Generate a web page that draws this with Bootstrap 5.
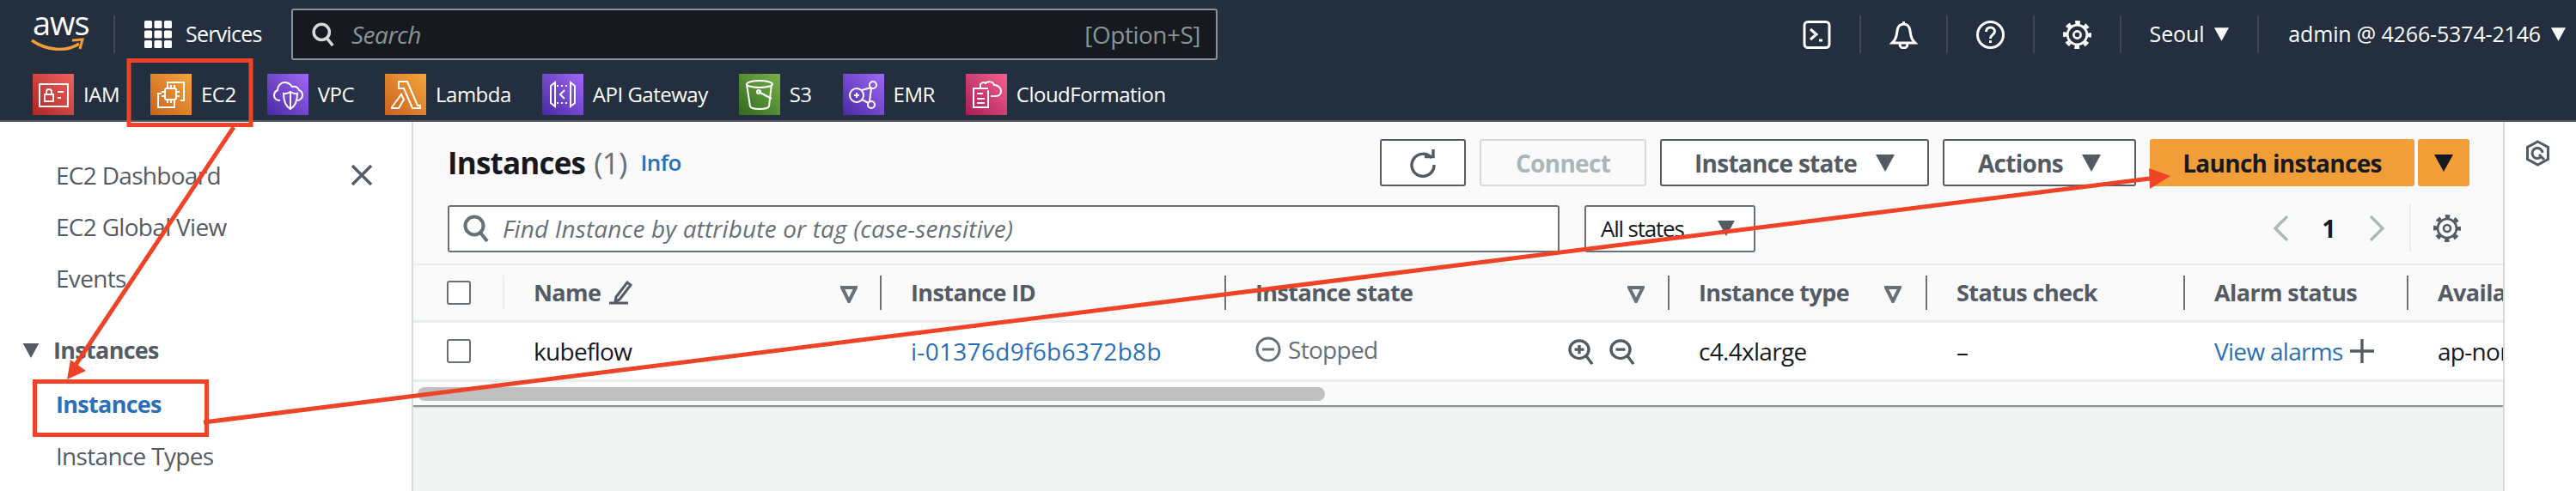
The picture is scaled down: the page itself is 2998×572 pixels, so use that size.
<!DOCTYPE html>
<html lang="en">
<head>
<meta charset="UTF-8">
<title>Instances | EC2</title>
<link href="https://cdn.jsdelivr.net/npm/bootstrap@5.3.3/dist/css/bootstrap.min.css" rel="stylesheet">
<style>
    html, body { height: 100%; }
    body { position: relative; overflow: hidden; background: #f2f3f3; color: #16191f; font-family: "Open Sans", "Liberation Sans", sans-serif; font-size: 24px; letter-spacing: -.6px; }
    svg { display: block; flex: none; }

    .top-head { height: 142px; background: #232f3e; border-bottom: 2px solid #545b64; color: #fff; }
    .top-row { height: 70px; padding: 10px 12px 0 36px; font-size: 25px; letter-spacing: -.15px; }
    .aws-logo { width: 62px; height: 44px; position: relative; }
    .aws-word { position: absolute; left: 2px; top: -14px; font: 400 38px/44px "Open Sans", sans-serif; letter-spacing: -1px; }
    .aws-smile { position: absolute; left: 0; top: 26px; }
    .top-sep { width: 2px; height: 44px; background: #414750; margin: 0 34px 0 34px; }
    .services-link { margin-left: 16px; width: 123px; letter-spacing: -.75px; }
    .top-search { width: 1078px; height: 60px; background: #16191f; border: 2px solid #879596; border-radius: 3px; padding: 0 18px 0 22px; color: #879596; font-size: 28px; letter-spacing: -.5px; }
    .top-search i { margin-left: 20px; }
    .head-cell { height: 44px; padding: 0 33px; border-right: 2px solid #414750; }
    .head-cell.plain { border-right: 0; padding-right: 0; padding-left: 34px; }
    .fav-row { padding-left: 38px; height: 70px; padding-top: 16px; letter-spacing: -.5px; }
    .fav-item { margin-right: 36px; }
    .fav-item span { margin-left: 11px; }

    .page-body { height: 430px; }
    .side-nav { width: 481px; flex: none; background: #fff; border-right: 2px solid #d5dbdb; padding: 32px 45px 0 65px; color: #545b64; font-size: 28px; letter-spacing: -.7px; }
    .side-link { height: 60px; }
    .side-group { height: 60px; margin: 24px 0 3px -39px; font-weight: 700; font-size: 27px; }
    .side-on { color: #2a6fb8; font-weight: 700; font-size: 27px; }

    .main-pane { flex: 1; min-width: 0; overflow: hidden; }
    .right-rail { width: 85px; flex: none; background: #fff; border-left: 2px solid #d5dbdb; padding: 21px 0 0 24px; }
    .pane-top { background: #fafafa; padding: 20px 39px 13px 40px; height: 165px; }
    .pane-title { font-size: 35px; font-weight: 700; letter-spacing: -.8px; }
    .pane-title em { font-style: normal; font-weight: 400; color: #687078; margin-left: 10px; }
    .info-link { color: #2a6fb8; font-size: 26px; font-weight: 600; margin-left: 16px; }
    .aws-btn { height: 55px; border: 2px solid #545b64; border-radius: 3px; background: #fff; color: #545b64; font-size: 28px; font-weight: 700; letter-spacing: -.7px; padding: 0; display: flex; align-items: center; justify-content: center; gap: 22px; }
    .aws-btn.off { border-color: #d5dbdb; color: #aab7b8; opacity: 1; }
    .aws-btn.go { background: #f29e38; border: 0; color: #16191f; }
    .btn-refresh { width: 100px; }
    .btn-connect { width: 194px; }
    .btn-state { width: 313px; }
    .btn-actions { width: 225px; }
    .btn-launch { width: 308px; }
    .btn-split { width: 60px; }
    .filter-box { width: 1294px; height: 55px; background: #fff; border: 2px solid #687078; border-radius: 3px; padding: 0 0 0 16px; color: #687078; font-style: italic; font-size: 28px; letter-spacing: .14px; }
    .state-pick { width: 199px; height: 55px; margin-left: 29px; background: #fff; border: 2px solid #687078; border-radius: 3px; padding: 0 22px 0 17px; font-size: 26px; letter-spacing: -1.2px; }
    .pager-wrap { margin-left: auto; margin-right: 10px; }
    .pager-sep { width: 2px; height: 56px; background: #eaeded; margin: 0 26px 0 28px; }
    .pager-num { font-weight: 700; font-size: 28px; margin: 0 39px; }

    .inst-table { width: 2600px; table-layout: fixed; margin: 0; border-top: 2px solid #eaeded; font-size: 28px; letter-spacing: -.7px; }
    .inst-table th, .inst-table td { padding: 0 0 0 34px; vertical-align: middle; position: relative; border-bottom: 3px solid #eaeded; white-space: nowrap; overflow: hidden; }
    .inst-table th { height: 66px; background: #fafafa; color: #545b64; font-weight: 700; font-size: 27px; letter-spacing: -.6px; }
    .inst-table td { height: 69px; background: #fff; color: #16191f; }
    .inst-table th::after { content: ""; position: absolute; right: 0; top: 12px; height: 40px; width: 2px; background: #687078; }
    .inst-table th.first-col::after { background: #eaeded; }
    .inst-table .first-col { padding-left: 39px; }
    .sel-box { width: 28px; height: 28px; background: #fff; border: 2px solid #687078; border-radius: 3px; }
    .col-filter { position: absolute; top: 24px; }
    .inst-link { color: #2a6fb8; }
    .id-link { letter-spacing: .3px; }
    .cell-gray { color: #687078; }
    .zoom-tools { position: absolute; top: 19px; left: 398px; }
    .scroll-bit { height: 29px; background: #fafafa; border-bottom: 2px solid #879596; padding: 6px 0 0 5px; box-shadow: 0 1px 2px rgba(0,0,0,.15); }
    .scroll-thumb { width: 1056px; height: 16px; background: #c0c0c0; border-radius: 8px; }

    .note-layer { position: absolute; left: 0; top: 0; pointer-events: none; }
</style>
</head>
<body>
<svg width="0" height="0" style="position:absolute">
    <symbol id="tri" viewBox="0 0 22 20"><polygon points="0,0 22,0 11,20" fill="currentColor"/></symbol>
    <symbol id="tri-open" viewBox="0 0 20 20"><polygon points="2,2 18,2 10,18" fill="none" stroke="currentColor" stroke-width="4"/></symbol>
    <symbol id="gear" viewBox="0 0 32 32">
        <g fill="none" stroke="currentColor">
            <circle cx="16" cy="16" r="11" stroke-width="2.6"/>
            <circle cx="16" cy="16" r="14" stroke-width="4" stroke-dasharray="5.5 5.5" stroke-dashoffset="2.7"/>
            <circle cx="16" cy="16" r="4" stroke-width="2.6"/>
        </g>
    </symbol>
    <symbol id="glass" viewBox="0 0 30 32"><g fill="none" stroke="currentColor" stroke-width="4"><circle cx="13" cy="13" r="10.5"/><path d="M20 21l8 10"/></g></symbol>
</svg>

<header class="top-head">
    <div class="top-row d-flex align-items-center">
        <div class="aws-logo">
            <span class="aws-word">aws</span>
            <svg class="aws-smile" width="62" height="18" viewBox="0 0 62 18"><path d="M1 3c17 12 40 14 55 4" fill="none" stroke="#f29e38" stroke-width="3.4"/><path d="M48 3l12-1-3 11" fill="none" stroke="#f29e38" stroke-width="3"/></svg>
        </div>
        <div class="top-sep"></div>
        <svg width="32" height="32" viewBox="0 0 32 32" fill="#fff"><rect width="9" height="9" rx="1.5"/><rect x="11.500" width="9" height="9" rx="1.5"/><rect x="23" width="9" height="9" rx="1.5"/><rect y="11.500" width="9" height="9" rx="1.5"/><rect x="11.500" y="11.500" width="9" height="9" rx="1.5"/><rect x="23" y="11.500" width="9" height="9" rx="1.5"/><rect y="23" width="9" height="9" rx="1.5"/><rect x="11.500" y="23" width="9" height="9" rx="1.5"/><rect x="23" y="23" width="9" height="9" rx="1.5"/></svg>
        <span class="services-link">Services</span>
        <div class="top-search d-flex align-items-center">
            <svg width="26" height="28" style="color:#d5dbdb"><use href="#glass"/></svg>
            <i>Search</i>
            <span class="ms-auto">[Option+S]</span>
        </div>
        <div class="d-flex align-items-center ms-auto">
            <div class="head-cell d-flex align-items-center"><svg width="33" height="33" viewBox="0 0 33 33" fill="none" stroke="#fff" stroke-width="3"><rect x="2" y="1.500" width="29" height="30" rx="4"/><path d="M9 10l7 6-7 6"/><path d="M19 23h4"/></svg></div>
            <div class="head-cell d-flex align-items-center"><svg width="33" height="33" viewBox="0 0 33 33" fill="none" stroke="#fff" stroke-width="3"><path d="M16.500 1v3M3 26c3-3 5-5 6-14 .5-5 3.500-8 7.500-8s7 3 7.500 8c1 9 3 11 6 14z"/><path d="M12 27c0 3 2 5 4.500 5s4.500-2 4.500-5"/></svg></div>
            <div class="head-cell d-flex align-items-center"><svg width="33" height="33" viewBox="0 0 33 33" fill="none" stroke="#fff" stroke-width="3"><circle cx="16.500" cy="16.500" r="15"/><path d="M11.500 13c0-3 2-5 5-5s5 2 5 4.500c0 4-5 4-5 8.500"/><path d="M16.500 23v3"/></svg></div>
            <div class="head-cell d-flex align-items-center"><svg width="33" height="33" style="color:#fff"><use href="#gear"/></svg></div>
            <div class="head-cell d-flex align-items-center gap-2">Seoul<svg width="17" height="18" class="ms-1" style="color:#fff"><use href="#tri"/></svg></div>
            <div class="head-cell plain d-flex align-items-center gap-2">admin @ 4266-5374-2146<svg width="17" height="18" class="ms-1" style="color:#fff"><use href="#tri"/></svg></div>
        </div>
    </div>
    <div class="fav-row d-flex align-items-start">
        <a class="fav-item d-flex align-items-center text-white text-decoration-none" href="#">
            <svg width="48" height="48" viewBox="0 0 48 48"><defs><linearGradient id="gr" x1="0" y1="1" x2="1" y2="0"><stop offset="0" stop-color="#b02525"/><stop offset="1" stop-color="#f0625f"/></linearGradient></defs><rect width="48" height="48" fill="url(#gr)"/><g fill="none" stroke="#fff" stroke-width="2"><rect x="8" y="12" width="33" height="26"/><rect x="14" y="24" width="10" height="8"/><path d="M16 24v-3a3 3 0 0 1 6 0v3M29 21h7M29 28h4"/></g></svg>
            <span>IAM</span>
        </a>
        <a class="fav-item d-flex align-items-center text-white text-decoration-none" href="#">
            <svg width="48" height="48" viewBox="0 0 48 48"><defs><linearGradient id="go" x1="0" y1="1" x2="1" y2="0"><stop offset="0" stop-color="#c8621f"/><stop offset="1" stop-color="#f5a53a"/></linearGradient></defs><rect width="48" height="48" fill="url(#go)"/><g fill="none" stroke="#fff" stroke-width="2"><path d="M20 13v-3h19v21h-4"/><rect x="17" y="17" width="13" height="13" rx="2"/><path d="M20 13v4M24 13v4M28 13v4M20 30v4M24 30v4M28 30v4M13 21h4M13 26h4M30 21h4M30 26h4"/><path d="M13 23H9v16h19v-5"/></g></svg>
            <span>EC2</span>
        </a>
        <a class="fav-item d-flex align-items-center text-white text-decoration-none" href="#">
            <svg width="48" height="48" viewBox="0 0 48 48"><defs><linearGradient id="gp" x1="0" y1="1" x2="1" y2="0"><stop offset="0" stop-color="#4a28a6"/><stop offset="1" stop-color="#9f68f5"/></linearGradient></defs><rect width="48" height="48" fill="url(#gp)"/><g fill="none" stroke="#fff" stroke-width="2"><path d="M15 31c-5 0-7-3-7-6 0-3 2-5 4-6 0-5 4-9 8-9 4 0 7 2 9 5 4-1 7 1 8 4 3 1 4 4 4 6 0 3-3 6-6 6"/><path d="M27 21c5 3 8 2 8 2 0 9-3 15-8 18-5-3-8-9-8-18 0 0 3 1 8-2zM27 22v18"/></g></svg>
            <span>VPC</span>
        </a>
        <a class="fav-item d-flex align-items-center text-white text-decoration-none" href="#">
            <svg width="48" height="48" viewBox="0 0 48 48"><rect width="48" height="48" fill="url(#go)"/><path d="M16 9h10l12 28h3v3h-9L22 17h-6zM19 24l3 6-6 10H8v-1z" fill="none" stroke="#fff" stroke-width="2"/></svg>
            <span>Lambda</span>
        </a>
        <a class="fav-item d-flex align-items-center text-white text-decoration-none" href="#">
            <svg width="48" height="48" viewBox="0 0 48 48"><rect width="48" height="48" fill="url(#gp)"/><g fill="none" stroke="#fff" stroke-width="2"><path d="M10 14v20l5 4V10zM38 14v20l-5 4V10z"/><path d="M26 19l-5 5 5 5M17 14h2M22 14h2M27 14h2M17 34h2M22 34h2M27 34h2"/></g></svg>
            <span>API Gateway</span>
        </a>
        <a class="fav-item d-flex align-items-center text-white text-decoration-none" href="#">
            <svg width="48" height="48" viewBox="0 0 48 48"><defs><linearGradient id="gg" x1="0" y1="1" x2="1" y2="0"><stop offset="0" stop-color="#2f6a1e"/><stop offset="1" stop-color="#79b04a"/></linearGradient></defs><rect width="48" height="48" fill="url(#gg)"/><g fill="none" stroke="#fff" stroke-width="2"><ellipse cx="24" cy="12" rx="15" ry="4"/><path d="M9 12l4 26c1 2 5 3 11 3s10-1 11-3l3-26"/><path d="M23 21l15 8"/><circle cx="23" cy="21" r="2"/></g></svg>
            <span>S3</span>
        </a>
        <a class="fav-item d-flex align-items-center text-white text-decoration-none" href="#">
            <svg width="48" height="48" viewBox="0 0 48 48"><rect width="48" height="48" fill="url(#gp)"/><g fill="none" stroke="#fff" stroke-width="2"><circle cx="16" cy="25" r="8"/><circle cx="35" cy="13" r="4"/><circle cx="33" cy="36" r="4"/><path d="M22 19l11-3M22 30l8 4M33 17l-2 15M13 25h6M16 22v6"/></g></svg>
            <span>EMR</span>
        </a>
        <a class="fav-item d-flex align-items-center text-white text-decoration-none" href="#">
            <svg width="48" height="48" viewBox="0 0 48 48"><defs><linearGradient id="gc" x1="0" y1="1" x2="1" y2="0"><stop offset="0" stop-color="#ab1d55"/><stop offset="1" stop-color="#f2618f"/></linearGradient></defs><rect width="48" height="48" fill="url(#gc)"/><g fill="none" stroke="#fff" stroke-width="2"><path d="M26 17H9v22h17V19M13 23h7M13 29h9M13 34h9"/><path d="M17 17v-5c3-3 5-2 6-1 3-3 9-2 10 2 4 0 8 3 8 7 0 4-3 6-6 6h-6"/></g></svg>
            <span>CloudFormation</span>
        </a>
    </div>
</header>

<div class="page-body d-flex">
    <nav class="side-nav">
        <div class="side-link d-flex align-items-center justify-content-between">EC2 Dashboard
            <svg width="26" height="26" viewBox="0 0 26 26"><path d="M2 2l22 22M24 2L2 24" stroke="#545b64" stroke-width="3.400"/></svg>
        </div>
        <div class="side-link d-flex align-items-center">EC2 Global View</div>
        <div class="side-link d-flex align-items-center">Events</div>
        <div class="side-group d-flex align-items-center gap-3"><svg width="20" height="17"><use href="#tri"/></svg>Instances</div>
        <div class="side-link side-on d-flex align-items-center">Instances</div>
        <div class="side-link d-flex align-items-center">Instance Types</div>
    </nav>

    <main class="main-pane">
        <div class="pane-top">
            <div class="d-flex align-items-center">
                <h1 class="pane-title m-0">Instances<em>(1)</em></h1>
                <a class="info-link text-decoration-none" href="#">Info</a>
                <div class="d-flex ms-auto" style="gap:16px">
                    <button class="btn aws-btn btn-refresh"><svg width="34" height="34" viewBox="0 0 34 34" fill="none" stroke="#545b64" stroke-width="3.400"><path d="M27 11a13 13 0 1 0 3 8"/><path d="M19 9.500h10V1"/></svg></button>
                    <button class="btn aws-btn off btn-connect" disabled>Connect</button>
                    <button class="btn aws-btn btn-state">Instance state<svg width="22" height="20"><use href="#tri"/></svg></button>
                    <button class="btn aws-btn btn-actions">Actions<svg width="22" height="20"><use href="#tri"/></svg></button>
                    <div class="d-flex" style="gap:4px">
                        <button class="btn aws-btn go btn-launch">Launch instances</button>
                        <button class="btn aws-btn go btn-split"><svg width="22" height="20"><use href="#tri"/></svg></button>
                    </div>
                </div>
            </div>
            <div class="d-flex align-items-center" style="margin-top:21px">
                <div class="filter-box d-flex align-items-center gap-3">
                    <svg width="30" height="32"><use href="#glass"/></svg>
                    <span>Find Instance by attribute or tag (case-sensitive)</span>
                </div>
                <div class="state-pick d-flex align-items-center justify-content-between">All states<svg width="20" height="18" style="color:#545b64"><use href="#tri"/></svg></div>
                <div class="pager-wrap d-flex align-items-center">
                    <svg width="19" height="30" viewBox="0 0 19 30" fill="none" stroke="#aab7b8" stroke-width="3.400"><path d="M17 1L3 15l14 14"/></svg>
                    <span class="pager-num">1</span>
                    <svg width="19" height="30" viewBox="0 0 19 30" fill="none" stroke="#aab7b8" stroke-width="3.400"><path d="M2 1l14 14L2 29"/></svg>
                    <div class="pager-sep"></div>
                    <svg width="32" height="32" style="color:#545b64"><use href="#gear"/></svg>
                </div>
            </div>
        </div>
        <table class="table inst-table">
            <colgroup>
                <col style="width:106px"><col style="width:439px"><col style="width:401px"><col style="width:516px"><col style="width:300px"><col style="width:300px"><col style="width:260px"><col style="width:278px">
            </colgroup>
            <thead>
                <tr>
                    <th class="first-col"><div class="sel-box"></div></th>
                    <th><span class="d-inline-flex align-items-center gap-2">Name
                        <svg width="30" height="28" viewBox="0 0 30 28"><path d="M10 19L23 2l4 3-13 17-5 2zM2 26h22" fill="none" stroke="#545b64" stroke-width="3"/></svg></span>
                        <svg class="col-filter" width="20" height="20" style="left:391px;color:#687078"><use href="#tri-open"/></svg></th>
                    <th>Instance ID</th>
                    <th>Instance state<svg class="col-filter" width="20" height="20" style="left:467px;color:#687078"><use href="#tri-open"/></svg></th>
                    <th>Instance type<svg class="col-filter" width="20" height="20" style="left:250px;color:#687078"><use href="#tri-open"/></svg></th>
                    <th>Status check</th>
                    <th>Alarm status</th>
                    <th>Availability Zone</th>
                </tr>
            </thead>
            <tbody>
                <tr>
                    <td class="first-col"><div class="sel-box"></div></td>
                    <td>kubeflow</td>
                    <td><a class="inst-link id-link text-decoration-none" href="#">i-01376d9f6b6372b8b</a></td>
                    <td>
                        <span class="cell-gray d-inline-flex align-items-center gap-2"><svg width="30" height="30" viewBox="0 0 30 30" fill="none" stroke="#687078" stroke-width="3"><circle cx="15" cy="15" r="13"/><path d="M8 15h14"/></svg>Stopped</span>
                        <span class="zoom-tools d-flex" style="gap:18px">
                            <svg width="30" height="30" viewBox="0 0 30 32" preserveAspectRatio="none" fill="none" stroke="#545b64" stroke-width="3.400"><circle cx="13" cy="13" r="11"/><path d="M21 21l7 10M7.500 13h11M13 7.500v11"/></svg>
                            <svg width="30" height="30" viewBox="0 0 30 32" preserveAspectRatio="none" fill="none" stroke="#545b64" stroke-width="3.400"><circle cx="13" cy="13" r="11"/><path d="M21 21l7 10M7.500 13h11"/></svg>
                        </span>
                    </td>
                    <td>c4.4xlarge</td>
                    <td>–</td>
                    <td><span class="d-inline-flex align-items-center gap-2"><a class="inst-link text-decoration-none" href="#">View alarms</a><svg width="28" height="28" viewBox="0 0 28 28"><path d="M14 0v28M0 14h28" stroke="#545b64" stroke-width="3.400"/></svg></span></td>
                    <td>ap-northeast-2a</td>
                </tr>
            </tbody>
        </table>
        <div class="scroll-bit"><div class="scroll-thumb"></div></div>
    </main>

    <aside class="right-rail">
        <svg width="29" height="31" viewBox="0 0 29 31" fill="none" stroke="#545b64" stroke-width="3"><path d="M14.500 2l12 6.500v14l-12 6.500-12-6.500v-14z"/><path d="M18 20a6 6 0 1 1 2-5M16 17l6 6"/></svg>
    </aside>
</div>

<svg class="note-layer" width="2998" height="572" viewBox="0 0 2998 572" fill="none">
    <rect x="150" y="70.500" width="142" height="75" stroke="#ee4326" stroke-width="5"/>
    <rect x="40.500" y="444.500" width="200" height="62" stroke="#ee4326" stroke-width="5"/>
    <path d="M272 148L88 425" stroke="#ee4326" stroke-width="5"/>
    <polygon points="78,442 82,419 100,432" fill="#ee4326"/>
    <path d="M237 492L2510 207" stroke="#ee4326" stroke-width="5"/>
    <polygon points="2526,205 2501,196 2502,220" fill="#ee4326"/>
</svg>
<script src="https://cdn.jsdelivr.net/npm/bootstrap@5.3.3/dist/js/bootstrap.bundle.min.js"></script>
</body>
</html>
